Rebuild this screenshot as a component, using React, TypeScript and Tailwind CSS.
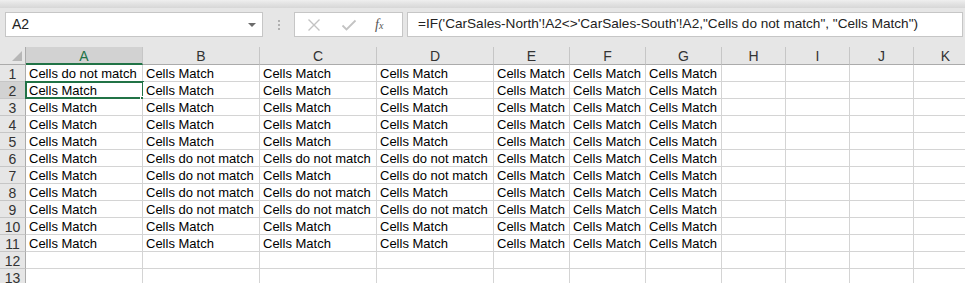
import React from "react";

const cols = [
  { l: "A", w: 117 },
  { l: "B", w: 117 },
  { l: "C", w: 117 },
  { l: "D", w: 117 },
  { l: "E", w: 76 },
  { l: "F", w: 76 },
  { l: "G", w: 76 },
  { l: "H", w: 64 },
  { l: "I", w: 64 },
  { l: "J", w: 64 },
  { l: "K", w: 64 },
];

const M = "Cells Match";
const N = "Cells do not match";

const data: string[][] = [
  [N, M, M, M, M, M, M],
  [M, M, M, M, M, M, M],
  [M, M, M, M, M, M, M],
  [M, M, M, M, M, M, M],
  [M, M, M, M, M, M, M],
  [M, N, N, N, M, M, M],
  [M, N, M, N, M, M, M],
  [M, N, N, M, M, M, M],
  [M, N, N, N, M, M, M],
  [M, M, M, M, M, M, M],
  [M, M, M, M, M, M, M],
  [],
  [],
];

const gridTemplate = "26px " + cols.map((c) => c.w + "px").join(" ");

export default function App() {
  return (
    <div
      className="w-[965px] h-[283px] overflow-hidden bg-[#e6e6e6] text-black"
      style={{ fontFamily: '"Liberation Sans", Arial, sans-serif' }}
    >
      {/* top strip */}
      <div className="h-[8px] bg-gradient-to-b from-[#efefef] via-[#e2e2e2] to-[#d7d7d7]" />
      {/* formula bar */}
      <div className="h-[39px] flex items-start pt-[4px]">
        <div className="ml-[5px] w-[258px] h-[25px] bg-white border border-[#c6c6c6] flex items-center justify-between pl-[6px] pr-[4px]">
          <span className="text-[14px] text-[#222]">A2</span>
          <svg width="10" height="6" viewBox="0 0 10 6" className="mr-[1px]">
            <path d="M1 1 L9 1 L5 5 Z" fill="#6b6b6b" />
          </svg>
        </div>
        <div className="w-[31px] h-[25px] flex flex-col items-center justify-center gap-[2px]">
          <span className="block w-[2px] h-[2px] bg-[#b0b0b0]" />
          <span className="block w-[2px] h-[2px] bg-[#b0b0b0]" />
          <span className="block w-[2px] h-[2px] bg-[#b0b0b0]" />
        </div>
        <div className="w-[109px] h-[25px] bg-white border border-[#c6c6c6] flex items-center">
          <svg width="14" height="14" viewBox="0 0 14 14" className="ml-[12px]">
            <path d="M1.5 1.5 L12.5 12.5 M12.5 1.5 L1.5 12.5" stroke="#c3c3c3" strokeWidth="1.4" />
          </svg>
          <svg width="16" height="14" viewBox="0 0 16 14" className="ml-[20px]">
            <path d="M1.5 7.5 L5.5 11.5 L14.5 2.5" stroke="#c3c3c3" strokeWidth="1.8" fill="none" />
          </svg>
          <span
            className="ml-[18px] text-[14px] italic text-[#555] leading-none"
            style={{ fontFamily: '"Liberation Serif", "Times New Roman", serif' }}
          >
            f<span className="text-[10px]">x</span>
          </span>
        </div>
        <div className="ml-[4px] w-[556px] h-[25px] bg-white border border-[#c6c6c6] flex items-center pl-[10px]">
          <span className="text-[13.6px] text-[#222] whitespace-nowrap">
            =IF('CarSales-North'!A2&lt;&gt;'CarSales-South'!A2,"Cells do not match", "Cells Match")
          </span>
        </div>
      </div>
      {/* grid */}
      <div
        className="grid"
        style={{ gridTemplateColumns: gridTemplate, gridTemplateRows: "18px", gridAutoRows: "17px" }}
      >
        {/* corner */}
        <div className="relative bg-[#e6e6e6] border-r border-b border-[#ababab]">
          <svg width="10" height="10" viewBox="0 0 10 10" className="absolute right-[3px] bottom-[3px]">
            <path d="M10 0 L10 10 L0 10 Z" fill="#b7b7b7" />
          </svg>
        </div>
        {cols.map((c, i) =>
          i === 0 ? (
            <div
              key={c.l}
              className="bg-[#d2d2d2] border-r border-[#c6c6c6] border-b-2 border-b-[#217346] flex items-center justify-center text-[14px] text-[#217346] leading-none pt-[1px]"
            >
              {c.l}
            </div>
          ) : (
            <div
              key={c.l}
              className="bg-[#e6e6e6] border-r border-[#c6c6c6] border-b border-b-[#ababab] flex items-center justify-center text-[14px] text-[#333] leading-none pt-[1px]"
            >
              {c.l}
            </div>
          )
        )}
        {data.map((row, r) => (
          <React.Fragment key={r}>
            <div
              className={
                "border-r border-b flex items-center justify-center text-[14px] leading-none pt-[1px] " +
                (r === 1
                  ? "bg-[#d2d2d2] border-r-[#ababab] border-b-[#c6c6c6] text-[#333]"
                  : "bg-[#e6e6e6] border-r-[#ababab] border-b-[#c6c6c6] text-[#333]")
              }
            >
              {r + 1}
            </div>
            {cols.map((c, ci) => (
              <div
                key={c.l}
                className="relative bg-white border-r border-b border-[#d4d4d4] pl-[3px] text-[13px] leading-[17px] whitespace-nowrap"
              >
                {row[ci] ?? ""}
                {r === 1 && ci === 0 && (
                  <>
                    <div className="absolute left-[-1px] top-[-1px] right-[-2px] bottom-[-1px] border-2 border-[#217346]" />
                    <div className="absolute right-[-4px] bottom-[-4px] w-[6px] h-[6px] bg-[#217346] border border-white" />
                  </>
                )}
              </div>
            ))}
          </React.Fragment>
        ))}
      </div>
    </div>
  );
}
